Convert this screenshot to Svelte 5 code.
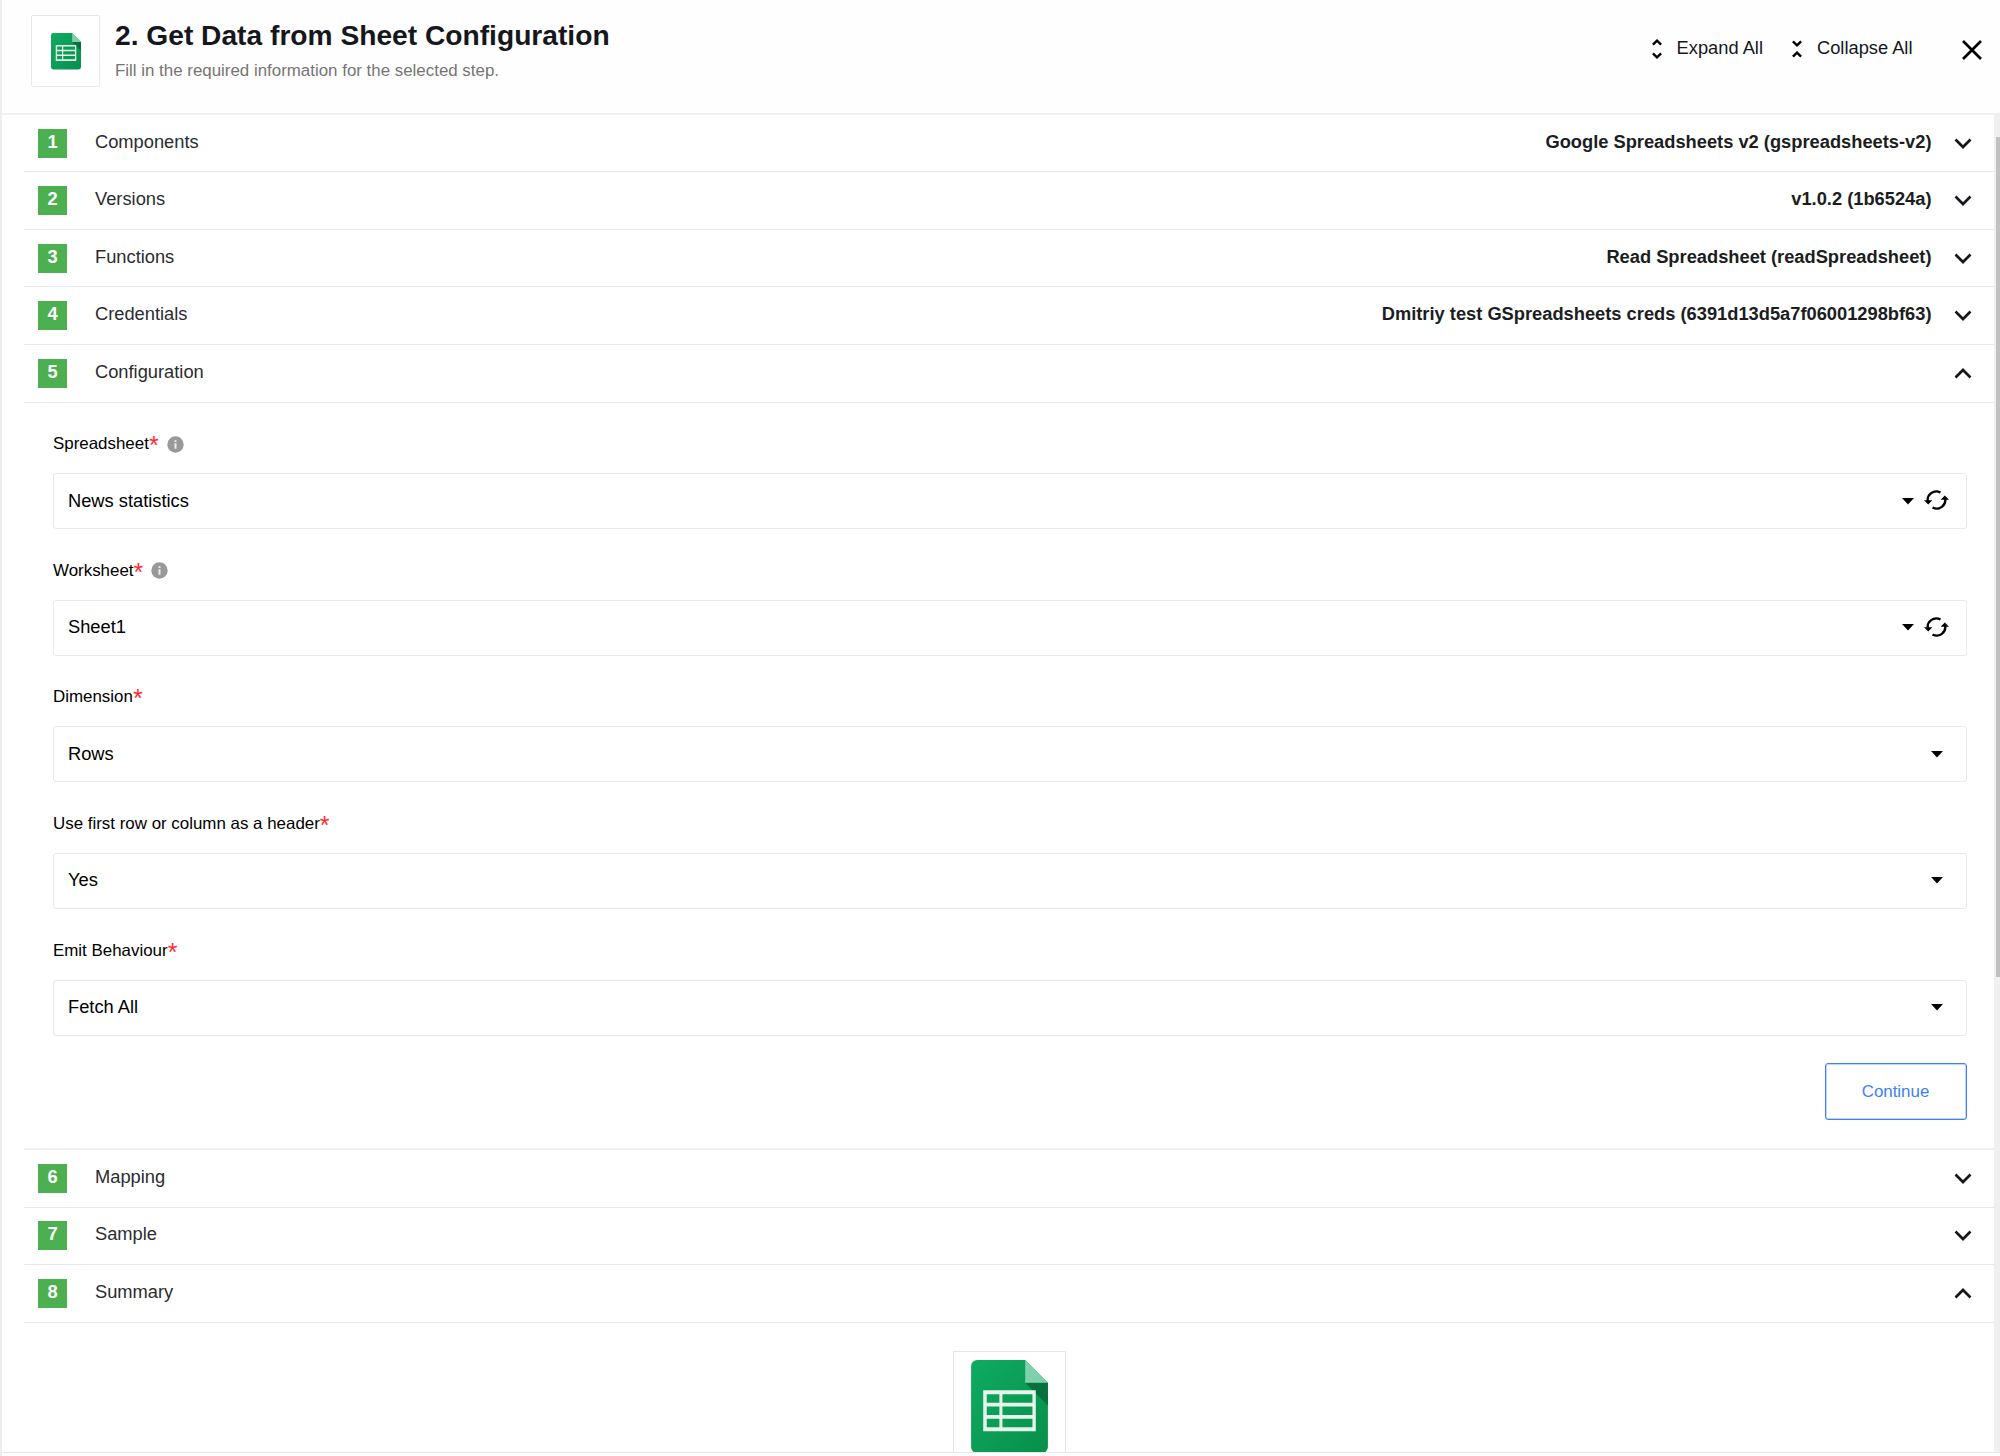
<script>
  const before = [
    { n: 1, title: 'Components', value: 'Google Spreadsheets v2 (gspreadsheets-v2)' },
    { n: 2, title: 'Versions', value: 'v1.0.2 (1b6524a)' },
    { n: 3, title: 'Functions', value: 'Read Spreadsheet (readSpreadsheet)' },
    { n: 4, title: 'Credentials', value: 'Dmitriy test GSpreadsheets creds (6391d13d5a7f06001298bf63)' },
    { n: 5, title: 'Configuration', value: '', open: true }
  ];
  const fields = [
    { label: 'Spreadsheet', value: 'News statistics', remote: true },
    { label: 'Worksheet', value: 'Sheet1', remote: true },
    { label: 'Dimension', value: 'Rows' },
    { label: 'Use first row or column as a header', value: 'Yes' },
    { label: 'Emit Behaviour', value: 'Fetch All' }
  ];
  const after = [
    { n: 6, title: 'Mapping', value: '' },
    { n: 7, title: 'Sample', value: '' },
    { n: 8, title: 'Summary', value: '', open: true }
  ];
</script>

{#snippet sheet(id)}
  <svg class="sheet" viewBox="0 0 76 92">
    <defs>
      <linearGradient id={id} x1="0" y1="0" x2="1" y2="1">
        <stop offset="0" stop-color="#0fab62" />
        <stop offset="1" stop-color="#078f4a" />
      </linearGradient>
    </defs>
    <path d="M6 0H53.500L76 22.500V86a6 6 0 0 1-6 6H6a6 6 0 0 1-6-6V6A6 6 0 0 1 6 0Z" fill="url(#{id})" />
    <path d="M53.500 22.500H76V45Z" fill="#07703c" />
    <path d="M53.500 0L76 22.500H53.500Z" fill="#7fd1ab" />
    <path d="M12 30H64V70.500H12ZM15.500 33.800V42.300H28V33.800ZM31 33.800V42.300H60.700V33.800ZM15.500 46V54.500H28V46ZM31 46V54.500H60.700V46ZM15.500 58V66.500H28V58ZM31 58V66.500H60.700V58Z" fill="#e6f5ec" fill-rule="evenodd" />
  </svg>
{/snippet}

{#snippet row(s)}
  <div class="row">
    <span class="num">{s.n}</span>
    <span class="name">{s.title}</span>
    <span class="val">{s.value}</span>
    <svg class="chev" class:up={s.open} viewBox="0 0 18 12"><path d="M1.500 1.500L9 9L16.500 1.500" /></svg>
  </div>
{/snippet}

<div class="panel">
  <header>
    <div class="logo">{@render sheet('g1')}</div>
    <div class="heading">
      <h1>2. Get Data from Sheet Configuration</h1>
      <p>Fill in the required information for the selected step.</p>
    </div>
    <div class="actions">
      <button class="act">
        <svg class="updown" viewBox="0 0 10 20"><path d="M.9 5.700L5 1.700L9.100 5.700M.9 14.300L5 18.300L9.100 14.300" /></svg>
        Expand All
      </button>
      <button class="act">
        <svg class="updown" viewBox="0 0 10 20"><path d="M.9 2.400L5 6.400L9.100 2.400M.9 17.600L5 13.600L9.100 17.600" /></svg>
        Collapse All
      </button>
      <svg class="close" viewBox="0 0 20 20"><path d="M1 1L19 19M19 1L1 19" /></svg>
    </div>
  </header>

  <div class="body">
    <main>
      {#each before as s}{@render row(s)}{/each}
      <section class="form">
        {#each fields as f}
          <div class="label">
            <span>{f.label}</span><span class="star">*</span>
            {#if f.remote}
              <svg class="info" viewBox="0 0 17 17">
                <circle cx="8.500" cy="8.500" r="8.200" fill="#999" />
                <path d="M7.500 4.300H9.500V6H7.500ZM7.500 7.300H9.500V12.700H7.500Z" fill="#eee" />
              </svg>
            {/if}
          </div>
          <div class="select">
            <span>{f.value}</span>
            <svg class="caret" viewBox="0 0 12 7"><path d="M0 0H12L6 6.500Z" /></svg>
            {#if f.remote}
              <svg class="refresh" viewBox="0 0 25 20">
                <path d="M4 12A8.500 8.500 0 0 1 16.500 2.600M21 8A8.500 8.500 0 0 1 8.500 17.400" fill="none" stroke="#000" stroke-width="2.300" />
                <path d="M0 10.300H8.400L4.200 14.600ZM16.600 9.700H25L20.800 5.400Z" />
              </svg>
            {/if}
          </div>
        {/each}
        <div class="foot"><button class="continue">Continue</button></div>
      </section>
      {#each after as s}{@render row(s)}{/each}
      <div class="summary"><div class="biglogo">{@render sheet('g2')}</div></div>
    </main>
    <div class="track"><div class="thumb"></div></div>
  </div>
</div>

<style>
  :global(body) { background: #fff; overflow: hidden; }
  .panel {
    box-sizing: border-box; width: 2000px; height: 1456px;
    display: flex; flex-direction: column; overflow: hidden;
    border-left: 2px solid #eee;
    font-family: "Liberation Sans", Arial, sans-serif; color: #15171c;
    background: #fff;
  }
  header {
    box-sizing: border-box; height: 115px; flex: none;
    display: flex; align-items: flex-start;
    padding: 15px 18px 0 29px; border-bottom: 2px solid #f0f0f0;
    background: #fefefe;
  }
  .logo {
    box-sizing: border-box; width: 69px; height: 72px; flex: none;
    border: 1px solid #e9e9e9; border-radius: 2px; background: #fff;
    display: flex; align-items: center; justify-content: center;
  }
  .sheet { display: block; width: 100%; height: 100%; }
  .logo .sheet { width: 30px; height: 36.500px; margin-top: 1px; }
  .heading { padding-left: 15px; }
  h1 { margin: 3px 0 0; font-size: 28.180px; line-height: 34px; font-weight: 700; white-space: nowrap; }
  p { margin: 9px 0 0; font-size: 16.900px; line-height: 20px; color: #757575; white-space: nowrap; }
  .actions { margin-left: auto; display: flex; align-items: flex-start; padding-top: 22px; }
  button { font: inherit; background: none; border: 0; padding: 0; }
  .act { display: flex; align-items: center; font-size: 18.300px; line-height: 22px; margin-right: 29px; color: #15171c; white-space: nowrap; }
  .updown { width: 10px; height: 20px; margin: 2px 15px 0 0; fill: none; stroke: #000; stroke-width: 2.400; }
  .close { width: 20px; height: 20px; margin: 3px 0 0 20.500px; stroke: #000; stroke-width: 2.700; fill: none; }

  .body { flex: 1; min-height: 0; display: flex; margin-bottom: 3px; border-bottom: 1px solid #e9e9e9; }
  main { flex: 1; padding-left: 22px; overflow: hidden; background: #fff; }
  .track { box-sizing: border-box; width: 6px; background: #f0f0f0; padding: 22px 0 0 2px; }
  .thumb { height: 840px; background: #c1c1c1; }

  .row {
    box-sizing: border-box; height: 57.600px; padding: 0 22px 0 14px;
    display: flex; align-items: center; border-bottom: 1px solid #e9e9e9;
    font-size: 18.300px; color: #2a2c31;
  }
  .row:first-child { height: 57.200px; }
  .num {
    width: 29px; height: 29px; line-height: 26px; text-align: center; background: #4caf50;
    color: #fff; font-weight: 700; font-size: 18.300px;
  }
  .name { padding: 0 0 3px 28px; }
  .val { margin-left: auto; font-weight: 700; color: #1b1d22; padding: 0 22.500px 3px 0; }
  .chev { width: 18px; height: 12px; margin-top: 1px; fill: none; stroke: #15171c; stroke-width: 2.700; }
  .up { transform: scaleY(-1); margin-top: -1px; }

  .form { box-sizing: border-box; height: 747.400px; padding: 27.600px 27.500px 0 29px; border-bottom: 2px solid #f0f0f0; }
  .label { box-sizing: border-box; height: 26px; padding-top: 2px; display: flex; align-items: center; font-size: 16.920px; color: #000; white-space: nowrap; }
  .star { color: #ff2d38; font-size: 25px; line-height: 20px; height: 18px; }
  .info { width: 17px; height: 17px; margin-left: 8px; }
  .select {
    box-sizing: border-box; height: 56px; margin: 17px 0 27.600px; padding: 0 17px 0 14px;
    display: flex; align-items: center; border: 1px solid #e9e9e9; border-radius: 3px;
    font-size: 18.300px; color: #000;
  }
  .select > span { flex: 1; padding-bottom: 1px; }
  .caret { width: 12px; height: 7px; margin-right: 10px; }
  .caret:last-child { margin-right: 6px; }
  .refresh { width: 25px; height: 20px; margin: 0 0 2px 0; }
  .foot { display: flex; justify-content: flex-end; }
  .continue {
    box-sizing: border-box; width: 142px; height: 57px; border: 1px solid #3f80fa; border-radius: 3px;
    color: #3f80fa; font-size: 16.900px; padding-top: 1px; outline: 1px solid #3f80fa55; outline-offset: -2px;
  }
  .summary { display: flex; justify-content: center; padding: 28px 0 0 0; }
  .biglogo {
    box-sizing: border-box; width: 113px; height: 130px; border: 1px solid #e6e6e6; padding: 8px 17px;
  }
  .biglogo .sheet { width: 77px; height: 93px; }
</style>
